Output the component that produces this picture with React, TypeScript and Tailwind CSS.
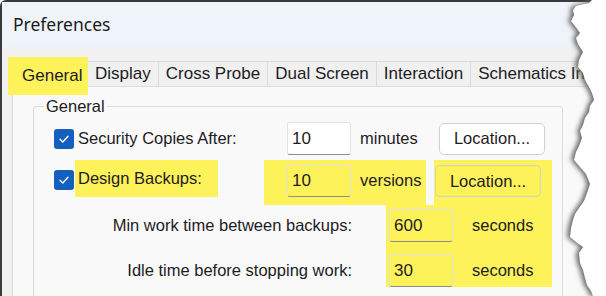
import React from 'react';

const TORN: [number, number][] = [
  [592, 0], [589, 3], [576, 6], [573, 10], [574, 15], [571, 21], [575, 26], [580, 33], [576, 38],
  [578, 44], [583, 52], [579, 60], [578, 67], [583, 73], [585, 80], [589, 87], [592, 93], [594, 100],
  [590, 106], [589, 112], [585, 118], [583, 125], [580, 131], [582, 138], [579, 146], [576, 152],
  [574, 160], [580, 167], [586, 174], [590, 184], [587, 193], [584, 201], [579, 208], [575, 214],
  [573, 220], [571, 228], [570, 237], [576, 242], [583, 247], [579, 253], [580, 263], [583, 270],
  [585, 278], [587, 285], [591, 291], [593, 296], [606, 296], [606, 0],
];

const tornPoints = TORN.map(([x, y]) => `${x - 546},${y}`).join(' ');

const Check = () => (
  <div className="flex h-[20px] w-[20px] shrink-0 items-center justify-center rounded-[3px] bg-[#145fbf]">
    <svg width="12" height="12" viewBox="0 0 12 12" fill="none">
      <path d="M2 6.3 L4.8 9 L10 3.2" stroke="white" strokeWidth="1.4" strokeLinecap="round" strokeLinejoin="round" />
    </svg>
  </div>
);

const Field = ({ value, yellow }: { value: string; yellow?: boolean }) => (
  <div
    className={`flex h-[33px] w-[64px] shrink-0 items-center rounded-[3px] border border-[#e2e2e2] border-b-[#8c8c8c] pl-[4px] text-[17px] ${
      yellow ? 'bg-[#fdf25a]' : 'bg-white'
    }`}
  >
    {value}
  </div>
);

const LocationButton = ({ yellow }: { yellow?: boolean }) => (
  <div
    className={`flex h-[32px] w-[106px] shrink-0 items-center justify-center rounded-[5px] border border-[#d0d0d0] ${
      yellow ? 'bg-[#fdf25a]' : 'bg-white'
    }`}
  >
    Location...
  </div>
);

const tabs = ['Display', 'Cross Probe', 'Dual Screen', 'Interaction', 'Schematics In..'];

export default function App() {
  return (
    <div className="relative h-[296px] w-[606px] overflow-hidden bg-white font-['Liberation_Sans',Arial,sans-serif] text-[16.5px] text-[#1e1b24]">
      <div className="flex h-full flex-col rounded-tl-[6px] border-l-2 border-t-2 border-[#3a3a3a]">
        {/* Title bar */}
        <div className="flex h-[45px] shrink-0 items-center bg-[#eef4f9] pl-[11px] font-['Noto_Sans',sans-serif] text-[17.5px] text-[#1c1c1c]">
          Preferences
        </div>

        <div className="flex flex-1 flex-col bg-[#f1f1f1]">
          {/* Tabs */}
          <div className="flex h-[39px] shrink-0 items-end pl-[6px] text-[17px]">
            <div className="relative z-10 -mb-[9px] flex h-[38px] w-[80px] shrink-0 items-start bg-[#fdf25a] pl-[14px] pt-[6px]">
              General
            </div>
            {tabs.map((t) => (
              <div
                key={t}
                className="flex h-[25px] shrink-0 items-center whitespace-nowrap border-r border-t border-[#dadada] bg-[#f0f0f0] px-[7px] first:border-l"
              >
                {t}
              </div>
            ))}
          </div>

          {/* Tab panel */}
          <div className="ml-[10px] flex-1 border-l border-t border-[#dcdcdc] bg-[#f9f9f9] pl-[20px] pt-[10px]">
            <fieldset className="w-[530px] rounded-[3px] border border-[#dcdcdc] pb-[20px]">
              <legend className="ml-[10px] px-[2px] leading-[18px]">General</legend>

              {/* Security copies */}
              <div className="mt-[7px] flex h-[33px] items-center">
                <div className="ml-[20px]">
                  <Check />
                </div>
                <div className="ml-[4px] w-[209px]">Security Copies After:</div>
                <Field value="10" />
                <div className="ml-[9px] w-[79px]">minutes</div>
                <LocationButton />
              </div>

              {/* Design backups */}
              <div className="mt-[5px] flex items-start">
                <div className="ml-[20px] mt-[10px]">
                  <Check />
                </div>
                <div className="ml-[1px] flex h-[37px] w-[143px] items-center bg-[#fdf25a] pl-[3px]">
                  Design Backups:
                </div>
                <div className="ml-[46px] flex h-[45px] w-[162px] items-start bg-[#fdf25a] pl-[23px] pt-[4px]">
                  <Field value="10" yellow />
                  <div className="ml-[9px] flex h-[33px] items-center">versions</div>
                </div>
                <div className="ml-[8px] h-[45px] w-[118px] bg-[#fdf25a] pl-[1px] pt-[5px]">
                  <LocationButton yellow />
                </div>
              </div>

              {/* Timing */}
              <div className="flex items-start">
                <div className="flex w-[352px] flex-col items-end gap-[12px] pr-[34px] pt-[4px]">
                  <div className="flex h-[33px] items-center">Min work time between backups:</div>
                  <div className="flex h-[33px] items-center">Idle time before stopping work:</div>
                </div>
                <div className="flex w-[166px] flex-col gap-[12px] bg-[#fdf25a] pl-[3px] pt-[4px]">
                  <div className="flex items-center">
                    <Field value="600" yellow />
                    <div className="ml-[19px]">seconds</div>
                  </div>
                  <div className="flex items-center">
                    <Field value="30" yellow />
                    <div className="ml-[19px]">seconds</div>
                  </div>
                </div>
              </div>
            </fieldset>
          </div>
        </div>
      </div>

      {/* torn edge */}
      <svg className="absolute right-0 top-0" width="60" height="296" viewBox="0 0 60 296">
        <defs>
          <filter id="tornShadow" x="-50%" y="-10%" width="200%" height="120%">
            <feGaussianBlur stdDeviation="2.5" />
          </filter>
        </defs>
        <polygon points={tornPoints} fill="#666666" transform="translate(-3,0)" filter="url(#tornShadow)" />
        <polygon points={tornPoints} fill="#ffffff" />
      </svg>
    </div>
  );
}
